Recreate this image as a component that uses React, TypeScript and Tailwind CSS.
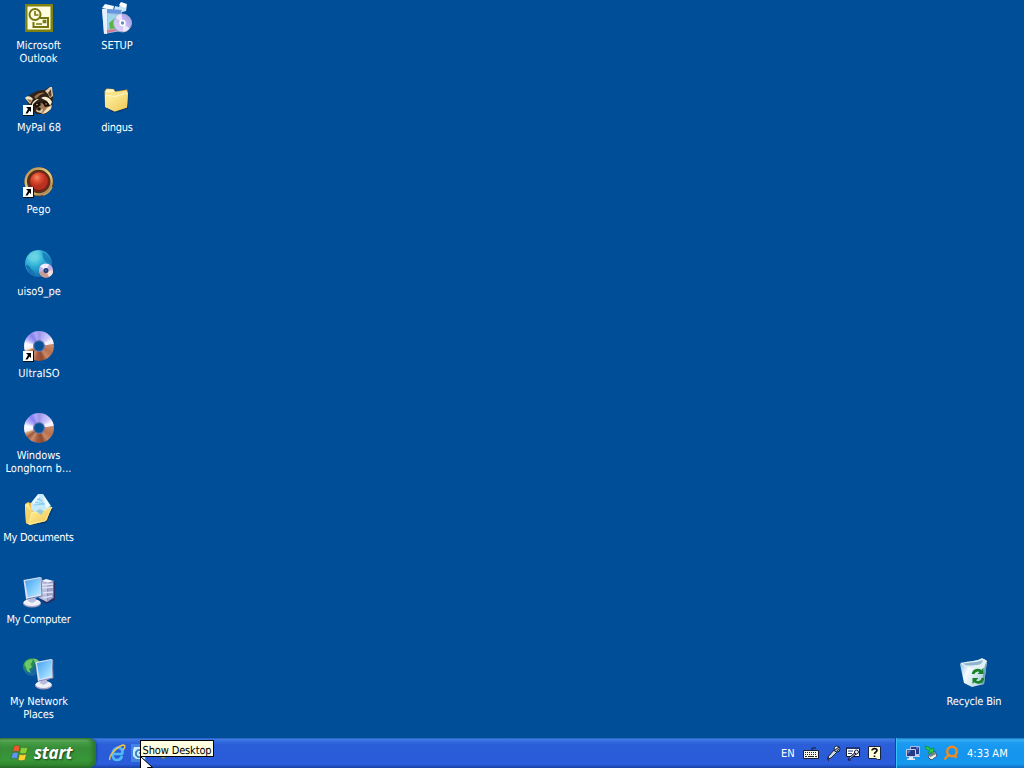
import type { ReactNode } from "react";

const labelFont = "font-['DejaVu_Sans_Condensed','DejaVu_Sans',sans-serif] [font-stretch:condensed]";

function Shortcut() {
  return (
    <g>
      <path d="M0 21h11v11H0z" fill="#111" />
      <path d="M0 21h10v10H0z" fill="#fff" />
      <path d="M3 23h5v5L6.500 26.500 4.500 29.500H2.500L5 25z" fill="#000" />
    </g>
  );
}

function Svg({ children, box = "0 0 32 32", className = "h-8 w-8" }: { children: ReactNode; box?: string; className?: string }) {
  return (
    <svg viewBox={box} className={`${className} shrink-0 overflow-visible`} fill="none">
      {children}
    </svg>
  );
}

function Outlook() {
  return (
    <Svg>
      <path d="M2 2h28v28H2z" fill="#80820f" />
      <path d="M4.500 4.500h23v23h-23z" fill="#fffde0" />
      <path d="M17 16h8v9H10.500v-5" stroke="#77750e" strokeWidth="2" />
      <circle cx="12" cy="12.500" r="5.500" fill="#fffde0" stroke="#77750e" strokeWidth="2" />
      <path d="M12 9v4h3.500" stroke="#77750e" strokeWidth="1.600" />
      <path d="M20.500 18.500h2v2h-2zM13 22h6" stroke="#77750e" strokeWidth="1.700" />
    </Svg>
  );
}

function Setup() {
  return (
    <Svg>
      <path d="M1 6l3-4 9 2-1 4z" fill="#f8fbff" />
      <path d="M13 8l1-4 4 1 2-4 6 2-1 6-7 2z" fill="#c9e4f4" />
      <path d="M18 3l2-3 6 2-2 4z" fill="#fff" />
      <path d="M1 7l20 1-1 21-17 3z" fill="#a9bfe9" />
      <path d="M1 7l5-.5V32l-3-.5z" fill="#e6f1ff" />
      <path d="M6 7l14 1v4L6 11z" fill="#6696dc" />
      <path d="M7 12l8 1v10l-8 2z" fill="#9bd6eb" />
      <path d="M8 21l6-5 3 10-8 1z" fill="#58b744" />
      <path d="M6 28l10-1-1 2-9 2z" fill="#d57c8a" />
      <circle cx="21.500" cy="21" r="9" fill="url(#cdface)" stroke="#aaa7cb" />
      <path d="M21.500 21L14.500 15.500a9 9 0 0 1 6-4zM21.500 21L28.500 26.500a9 9 0 0 1-6 3.500z" fill="#fff" opacity=".65" />
      <circle cx="21.500" cy="21" r="3.300" fill="#fff" />
      <circle cx="21.500" cy="21" r="1.700" fill="#668bc3" />
      <defs>
        <linearGradient id="cdface" x1="0" y1="1" x2="1" y2="0">
          <stop stopColor="#e1dcf8" />
          <stop offset=".5" stopColor="#c9bff4" />
          <stop offset="1" stopColor="#9d93e4" />
        </linearGradient>
      </defs>
    </Svg>
  );
}

function Raccoon() {
  return (
    <Svg>
      <path d="M3 14c2-3 6-4 9-6 4-2 7-2 10-2l4-3h3l1 10-1 11-6 6H13L7 24z" fill="#312319" />
      <path d="M22 7l5-4h2l1 9-3 2-2-4z" fill="#e3cfae" />
      <path d="M25 9l3-4 .5 7-1.500 1z" fill="#5a3b24" />
      <path d="M2 14c2-3 6-2 8 1l-3 5z" fill="#f2e4c7" />
      <path d="M4 15l5 1-2 3z" fill="#9c764e" />
      <path d="M11 13c3-4 7-5 11-4l-5 2-4 4z" fill="#997044" />
      <path d="M9 20c1-3 4-5 7-5l-4 3-3 4zM18 14c5-3 9 0 11 4l-2 4-3-5z" fill="#f8edce" />
      <path d="M15 20l6-1 7 3-2 5-6 3-7-3z" fill="#a47c56" />
      <path d="M24 24l5-3-1 4-5 4-4 1z" fill="#f2e2c0" />
      <path d="M10 20l6-2 2 3-4 3zM19 18c4-2 7 1 8 4l-5 1z" fill="#190f0a" />
      <path d="M13 26l7-1-1 4-5-1z" fill="#d9c6a4" />
      <circle cx="16" cy="25" r="1.800" fill="#18100d" />
      <circle cx="14" cy="20.500" r=".8" fill="#ddb86f" />
      <circle cx="23" cy="20" r=".7" fill="#ddb86f" />
      <Shortcut />
    </Svg>
  );
}

function Folder() {
  return (
    <Svg>
      <path d="M26 9l2 1-1 15-12 4-6-2z" fill="#07345f" opacity=".6" />
      <path d="M3.500 7l2-2.500 7 .5 2 2.500 11.500-2 1 3-1 15-12 4-10-5z" fill="#dba944" />
      <path d="M4 8l2-3 6.500.5L14 8l-8 2z" fill="#fff5b7" />
      <path d="M4 9l10-1L26 6.500V22l-12 5L4 23z" fill="#fbe38a" />
      <path d="M4 11l10 1.500L27 9l-1 14.500L13.500 27.500 4.500 23z" fill="url(#folder)" />
      <path d="M4.500 11l9.500 1.500L26.500 9" stroke="#fff8c5" />
      <defs>
        <linearGradient id="folder" x1="0" y1="0" x2="1" y2="1">
          <stop stopColor="#fff5a9" />
          <stop offset="1" stopColor="#efc553" />
        </linearGradient>
      </defs>
    </Svg>
  );
}

function Pego() {
  return (
    <Svg>
      <circle cx="16" cy="16" r="14.500" fill="#513519" />
      <circle cx="15.700" cy="15.500" r="13" stroke="url(#ring)" strokeWidth="2.500" />
      <circle cx="16" cy="15.500" r="10.500" fill="#762318" />
      <circle cx="16" cy="15" r="8.800" fill="url(#ruby)" />
      <path d="M20 29a14 14 0 0 0 9-8" stroke="#c2a570" strokeWidth="1.500" />
      <defs>
        <linearGradient id="ring" x1=".2" y1="0" x2=".9" y2="1">
          <stop stopColor="#bc9350" />
          <stop offset=".45" stopColor="#efcf89" />
          <stop offset="1" stopColor="#9c7845" />
        </linearGradient>
        <radialGradient id="ruby" cx=".38" cy=".3">
          <stop stopColor="#f68b67" />
          <stop offset=".5" stopColor="#dc4c31" />
          <stop offset="1" stopColor="#b8301f" />
        </radialGradient>
      </defs>
      <Shortcut />
    </Svg>
  );
}

function Globe() {
  return (
    <Svg>
      <circle cx="15.500" cy="15.500" r="13.500" fill="url(#sea)" />
      <path d="M4 10c3-6 8-8 14-7-3 1-4 4-3 7-4 1-3 4-6 4z" fill="#67ccdf" opacity=".65" />
      <path d="M19 4c5 2 8 6 9 10-4 2-6-1-8-4z" fill="#1474b3" opacity=".7" />
      <path d="M3 17c3 0 4 2 5 4 2 2 4 3 4 7-4-1-8-5-9-11z" fill="#1771b3" />
      <circle cx="23" cy="22.500" r="7" fill="#c4b4df" />
      <path d="M23 22.500l-6-4a7 7 0 0 1 9-2z" fill="#f1ecff" />
      <path d="M23 22.500L16 24a7 7 0 0 0 10 5z" fill="#c89b96" />
      <path d="M23 22.500h7a7 7 0 0 1-4 6.500z" fill="#f6dfd8" />
      <circle cx="23" cy="22.500" r="2.500" fill="#203a75" />
      <circle cx="23" cy="22.500" r="1" fill="#3d77b2" />
      <defs>
        <radialGradient id="sea" cx=".35" cy=".25" r=".8">
          <stop stopColor="#78e8f2" />
          <stop offset=".5" stopColor="#27a6d0" />
          <stop offset="1" stopColor="#1168aa" />
        </radialGradient>
      </defs>
    </Svg>
  );
}

function Disc({ shortcut = false }: { shortcut?: boolean }) {
  return (
    <div className="grid h-8 w-8 shrink-0 place-items-center *:col-start-1 *:row-start-1">
      <div className="h-[30px] w-[30px] rounded-full bg-[conic-gradient(#9a93ea_0deg,#bdb6f6_28deg,#ccc6fa_48deg,#faf8ff_68deg,#f1edff_80deg,#c98a69_84deg,#b9704f_120deg,#c98765_145deg,#8e4a32_165deg,#a65c40_190deg,#c98d6d_212deg,#9c563c_230deg,#cf9674_246deg,#e8c391_252deg,#f4f1ff_256deg,#fbfaff_280deg,#b4b0fb_300deg,#8780f2_325deg,#b0a9f5_346deg,#9a93ea_360deg)]" />
      <Svg>
        <circle cx="16" cy="16" r="6" fill="#6976ad" />
        <circle cx="16" cy="16" r="4.800" fill="#075397" />
        {shortcut && <Shortcut />}
      </Svg>
    </div>
  );
}

function Documents() {
  return (
    <Svg>
      <path d="M28 15l2 0-7 14-15 2z" fill="#062744" opacity=".6" />
      <path d="M2 10l3-2 5 2 18 3-4 13-17 5-4-2z" fill="#eec14d" />
      <path d="M8 9l7-9h5l8 12-12 10-8-7z" fill="#c5eafb" />
      <path d="M15 1l2 1-6 8-2-2zM20 1l7 10-4 4z" fill="#eafaff" />
      <path d="M14 5l5 2M12 8l9 2M11 11l11-1M16 4l4 5" stroke="#8acbef" strokeWidth="1.200" />
      <path d="M2 11l3-2 4 9 7 1 13-6-6 14-16 4-4-2z" fill="url(#docs)" />
      <path d="M3 12v16l4 2 2-12z" fill="#f3d36d" />
      <path d="M6 30l3-12 7 1 13-6-7 14z" fill="url(#docs)" stroke="#fff3a5" strokeWidth=".7" />
      <path d="M13 17l4-2 4 2-3 4z" fill="#9bc8d7" />
      <defs>
        <linearGradient id="docs" x1="0" y1="0" x2="1" y2="1">
          <stop stopColor="#fff4a1" />
          <stop offset="1" stopColor="#efc14c" />
        </linearGradient>
      </defs>
    </Svg>
  );
}

function Monitor() {
  return (
    <g>
      <ellipse cx="9" cy="27.500" rx="9" ry="4" fill="#a4a1c1" />
      <ellipse cx="9" cy="26.500" rx="8.500" ry="3.500" fill="#f0f0fa" />
      <path d="M7 20l5-1 1 6-4 2-4-2z" fill="#b9bddd" />
      <path d="M.5 4L17 1l2 1v18L4 24l-1-1z" fill="#d7e1f5" />
      <path d="M2 5l15-3 1 16L5 21z" fill="url(#screen)" />
      <path d="M18 2l1 18-15 3" stroke="#787fae" />
      <defs>
        <linearGradient id="screen" x1="0" y1="0" x2="1" y2="1">
          <stop stopColor="#459eed" />
          <stop offset=".55" stopColor="#83cdfd" />
          <stop offset="1" stopColor="#c2efff" />
        </linearGradient>
      </defs>
    </g>
  );
}

function Computer() {
  return (
    <Svg>
      <path d="M18 6l6-2 8 2v18l-9 4-6-4z" fill="#242f68" />
      <path d="M18 5l5-2 8 2-6 2z" fill="#eef0ff" />
      <path d="M17 5l8 2-1 19-8-4z" fill="#b9bfdd" />
      <path d="M25 7l5.500-2v17L24 26z" fill="#9fa3c8" />
      <path d="M19 9l11-1M19 12l11-1M19 17l11-1M20 22l9-2" stroke="#dfe2f5" strokeWidth="1.300" />
      <Monitor />
    </Svg>
  );
}

function Network() {
  return (
    <Svg>
      <circle cx="9" cy="9" r="9" fill="url(#earth)" />
      <path d="M2 7c0-3 4-6 8-6l-1 3-2 2 2 3-3 2 2 4-4-2-1-4z" fill="#71c86c" />
      <path d="M10 1c3-1 6 1 7 4l-4 2z" fill="#73c56a" />
      <g transform="translate(12 0) scale(.95 1)"><Monitor /></g>
      <defs>
        <radialGradient id="earth" cx=".25" cy=".3">
          <stop stopColor="#6de15d" />
          <stop offset=".5" stopColor="#239740" />
          <stop offset="1" stopColor="#1766a0" />
        </radialGradient>
      </defs>
    </Svg>
  );
}

function Recycle() {
  return (
    <Svg>
      <path d="M2 6l14-3 10-2 3 2-3 23-12 3-8-4z" fill="url(#bin)" />
      <path d="M2 5C9 3 18 4 24 0l5 3c-1 6-4 8-9 7C14 11 7 9 2 5z" fill="#e1f0f5" />
      <path d="M5 5.500c6-1 14-1 20-3.500-1 4-3 5-8 5-5 1-9 1-12-1.500z" fill="#8eb5cf" />
      <path d="M27 7l2-4-3 23-3 1z" fill="#74a4bd" />
      <path d="M15 16c1-4 6-5 8-2M25 20c-1 5-6 6-9 2" stroke="#168128" strokeWidth="2.700" />
      <path d="M25.500 10v6h-6zM14.500 26v-6h6z" fill="#168128" />
      <defs>
        <linearGradient id="bin" x1="0" y1="0" x2="1" y2=".5">
          <stop stopColor="#7fb5db" />
          <stop offset=".4" stopColor="#f4fdff" />
          <stop offset="1" stopColor="#b1d1dd" />
        </linearGradient>
      </defs>
    </Svg>
  );
}

function DesktopItem({ icon, lines }: { icon: ReactNode; lines: [string, string][] }) {
  return (
    <div className="flex h-[82px] w-[78px] flex-col items-center pt-[2px]">
      {icon}
      <div className={`mt-[5px] flex flex-col items-center text-[11px] leading-[13px] whitespace-nowrap text-white ${labelFont}`}>
        {lines.map(([text, tracking]) => (
          <span key={text} className={tracking}>{text}</span>
        ))}
      </div>
    </div>
  );
}

function StartFlag() {
  return (
    <Svg box="0 0 19 18" className="h-[18px] w-[19px]">
      <g stroke="#2d642c" strokeWidth=".5">
        <path d="M3 2c2-1 4-1 6 0L8 8C6 7 4 7 1.500 8z" fill="#ec592b" />
        <path d="M10 3c2 1 4 1 7 0l-1.500 6c-2 1-5 1-7 0z" fill="#86cf36" />
        <path d="M1.500 9c2-1 4-1 6 0l-1.500 6c-2-1-3-1-6 0z" fill="#5c96f4" />
        <path d="M8.500 10c2 1 4 1 7 0l-1.500 6c-3 1-5 1-7 0z" fill="#ffd02d" />
      </g>
    </Svg>
  );
}

function Explorer() {
  return (
    <Svg box="0 0 18 18" className="h-[18px] w-[18px]">
      <path d="M14 12c-1 3-3 4-5 4-5 0-6-7-2-11 4-3 9 0 7 5H6" stroke="#52b9f7" strokeWidth="2.700" />
      <path d="M2 16C0 13 8 3 15 1c3 0 2 3 0 5" stroke="#f1c34c" strokeWidth="1.500" />
    </Svg>
  );
}

function ShowDesktop() {
  return (
    <Svg box="0 0 16 16" className="h-4 w-4">
      <path d="M0-1h15v18H0z" fill="#4583e2" />
      <path d="M3 2h11v12H5l-3-3V5z" fill="#cbeaff" />
      <path d="M11 5H7L5 7v3l2 2h4M8 8h4v4" stroke="#2878be" strokeWidth="1.700" />
    </Svg>
  );
}

function MediaIcon() {
  return (
    <Svg box="0 0 16 16" className="h-4 w-4">
      <circle cx="7" cy="7.500" r="6.500" fill="#2b5f9b" />
      <path d="M5 12l7-4v3l-5 3z" fill="#7f8f69" />
    </Svg>
  );
}

function Keyboard() {
  return (
    <Svg box="0 0 16 16" className="h-4 w-4">
      <path d="M9 5V3h4" stroke="#101936" />
      <path d="M.5 5.500h15v8H.5z" fill="#f4f4ec" stroke="#141c34" />
      <path d="M2 7.500h12M2 9.500h12" stroke="#222" strokeDasharray="1 1" />
      <path d="M2 11.500h2M5 11.500h6M12 11.500h2" stroke="#222" />
    </Svg>
  );
}

function Mic() {
  return (
    <Svg box="0 0 16 16" className="h-4 w-4">
      <path d="M3 12l6-7 3 2-6 6-3 1z" fill="#d5dbe3" stroke="#172349" />
      <circle cx="12" cy="4" r="3" fill="#aab6c1" stroke="#172349" />
      <path d="M10 5l4-3M12 6l2-2M4 12l-2 2 2 1-1 1" stroke="#222b40" />
      <path d="M10 3l2-1" stroke="white" strokeWidth="1.300" />
    </Svg>
  );
}

function Handwriting() {
  return (
    <Svg box="0 0 16 16" className="h-4 w-4">
      <path d="M1.500 2.500h13v9h-13z" fill="#fff" stroke="#101735" />
      <path d="M1.500 3h13" stroke="#20377b" strokeWidth="2" />
      <path d="M3 6h5M3 8.500h4" stroke="#243966" />
      <path d="M5 13l6-5" stroke="#101735" strokeWidth="2.500" />
      <path d="M5 13l6-5" stroke="#fff" strokeWidth=".8" />
      <circle cx="11.500" cy="7" r="2" fill="#eee" stroke="#101735" />
      <path d="M4 13l-1 2h3" stroke="#101735" />
    </Svg>
  );
}

function Help() {
  return (
    <Svg box="0 0 16 16" className="h-4 w-4">
      <path d="M1.500 1.500h12v13h-3L9 13.500H1.500z" fill="#ffffd9" stroke="#172447" />
      <path d="M5 5.500C5 3 10 3 10 5.500 10 7 7.500 7 7.500 9M7.500 10.500v1.500" stroke="#111" strokeWidth="1.700" />
    </Svg>
  );
}

function NetTray() {
  return (
    <Svg box="0 0 16 16" className="h-4 w-4">
      <path d="M5.500 1.500h9v8h-9z" fill="#263d8f" stroke="#a6bbe5" />
      <path d="M9 10h5l1 2H7z" fill="#c5d0e8" />
      <path d="M1.500 4.500h9v7h-9z" fill="#263a84" stroke="#c1cdea" />
      <path d="M4 12h4v1.500h2V15H2v-1.500h2z" fill="#e8e9f6" />
      <path d="M2 5.500h4L3 9zM11 2h3l-2 3z" fill="#5d80ca" />
    </Svg>
  );
}

function DeviceTray() {
  return (
    <Svg box="0 0 16 16" className="h-4 w-4">
      <path d="M5 10l6-4 2 5-6 4-3-3z" fill="#dedfd0" stroke="#3d5576" />
      <path d="M5 10l6-3 1 2-6 3z" fill="#6f8389" />
      <path d="M1 1l4 1 1 2 4-1-1 5H4l2-2-4-2z" fill="#27cf45" stroke="#16843a" strokeWidth=".7" />
      <path d="M7 13l5-3v1l-4 3z" fill="#fff" />
    </Svg>
  );
}

function SearchTray() {
  return (
    <Svg box="0 0 16 16" className="h-4 w-4">
      <circle cx="9" cy="6.500" r="4.800" stroke="#f28a20" strokeWidth="2.400" />
      <path d="M5.500 10L1.500 14.500M12 10l1 3" stroke="#f28a20" strokeWidth="2.400" />
    </Svg>
  );
}

export default function App() {
  return (
    <div className="relative flex h-[768px] w-[1024px] flex-col overflow-hidden bg-[#004e98] [text-rendering:geometricPrecision]">
      <main className="flex h-[738px] items-start">
        <div className="flex w-[78px] flex-col">
          <DesktopItem icon={<Outlook />} lines={[["Microsoft", "mr-[1px] tracking-[-0.05px]"], ["Outlook", "mr-[1px] tracking-[-0.1px]"]]} />
          <DesktopItem icon={<Raccoon />} lines={[["MyPal 68", "tracking-[-0.05px]"]]} />
          <DesktopItem icon={<Pego />} lines={[["Pego", "mr-[1px] tracking-[0px]"]]} />
          <DesktopItem icon={<Globe />} lines={[["uiso9_pe", "tracking-[-0.05px]"]]} />
          <DesktopItem icon={<Disc shortcut />} lines={[["UltraISO", "tracking-[0.05px]"]]} />
          <DesktopItem icon={<Disc />} lines={[["Windows", "mr-[1px] tracking-[-0.1px]"], ["Longhorn b...", "mr-[1px] tracking-[0.07px]"]]} />
          <DesktopItem icon={<Documents />} lines={[["My Documents", "mr-[1px] tracking-[-0.3px]"]]} />
          <DesktopItem icon={<Computer />} lines={[["My Computer", "mr-[1px] tracking-[-0.25px]"]]} />
          <DesktopItem icon={<Network />} lines={[["My Network", "tracking-[-0.1px]"], ["Places", "mr-[1px] tracking-[-0.2px]"]]} />
        </div>
        <div className="flex w-[78px] flex-col">
          <DesktopItem icon={<Setup />} lines={[["SETUP", "tracking-[-0.1px]"]]} />
          <DesktopItem icon={<Folder />} lines={[["dingus", "tracking-[-0.25px]"]]} />
        </div>
        <div className="mr-[11px] ml-auto pt-[656px]">
          <DesktopItem icon={<Recycle />} lines={[["Recycle Bin", "tracking-[-0.2px]"]]} />
        </div>
      </main>
      <footer className={`flex h-[30px] w-full items-stretch bg-[linear-gradient(#1d4fb0_0,#3f7ee6_1px,#366fe0_3px,#2b5fd9_6px,#2a5bd8_20px,#2b5edc_26px,#1941a5_30px)] text-[11px] text-white ${labelFont}`}>
        <button className="flex w-[96px] items-center rounded-r-[8px] bg-[linear-gradient(#317a35_0,#66ad65_2px,#439b43_5px,#388e38_10px,#389738_22px,#32882f_27px,#236725_30px)] pl-[11px] shadow-[inset_-3px_0_4px_#28722b,1px_0_2px_#17479d]">
          <StartFlag />
          <span className="ml-[4px] pb-[1px] font-['Open_Sans','Noto_Sans',sans-serif] text-[17px] leading-5 font-bold tracking-[-0.2px] italic [font-stretch:normal] [text-shadow:1px_1px_2px_#173f1b]">start</span>
        </button>
        <div className="flex items-center gap-[5px] pl-[12px]">
          <Explorer />
          <ShowDesktop />
          <span className="ml-[4px]"><MediaIcon /></span>
        </div>
        <div className="ml-auto flex w-[114px] items-center gap-[5px]">
          <span className="w-[17px] pt-[3px] tracking-[0.1px]">EN</span>
          <Keyboard />
          <span className="ml-[1px]"><Mic /></span>
          <span className="ml-[-1px]"><Handwriting /></span>
          <span className="ml-[1px]"><Help /></span>
        </div>
        <div className="flex w-[129px] items-center gap-[3px] border-l border-[#154395] bg-[linear-gradient(#1475c7_0,#37aff2_2px,#1a9af0_5px,#1594ec_18px,#1599ef_26px,#126cc0_30px)] pl-[9px] shadow-[inset_1px_0_#39c3fa]">
          <NetTray />
          <DeviceTray />
          <SearchTray />
          <span className="ml-[5px] pt-[2px] whitespace-nowrap tracking-[0px]">4:33 AM</span>
        </div>
      </footer>
      <div className={`absolute top-[740px] left-[140px] flex h-[17px] w-[74px] items-center justify-center border border-black bg-[#ffffe1] pt-[3px] text-[11px] leading-[13px] whitespace-nowrap text-black ${labelFont}`}>
        <span className="tracking-[-0.15px]">Show Desktop</span>
      </div>
      <svg className="absolute top-[756px] left-[140px] h-[21px] w-[13px]" viewBox="0 0 13 21">
        <path d="M.5.500v16l4-4 3 7 3-1-3-7h5z" fill="#fff" stroke="#000" />
      </svg>
    </div>
  );
}
